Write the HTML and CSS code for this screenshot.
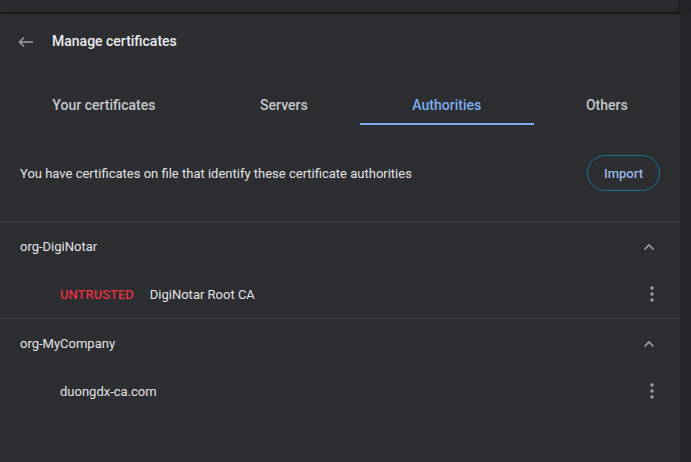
FILE: index.html
```html
<!DOCTYPE html>
<html>
<head>
<meta charset="utf-8">
<link rel="stylesheet" href="styles.css">
</head>
<body>
<div class="topbar"></div>
<div class="page">
  <main class="card">
    <header class="header">
      <svg class="back" width="16" height="12" viewBox="0 0 16 12"><path d="M15 6H1.5M6 1.5L1.5 6 6 10.5" fill="none" stroke="#9aa0a6" stroke-width="1.5"/></svg>
      <h1 class="title">Manage certificates</h1>
    </header>
    <nav class="tabs">
      <div class="tab">Your certificates</div>
      <div class="tab">Servers</div>
      <div class="tab active">Authorities</div>
      <div class="tab">Others</div>
    </nav>
    <section class="intro">
      <p class="intro-text">You have certificates on file that identify these certificate authorities</p>
      <button class="import">Import</button>
    </section>
    <section class="group">
      <div class="group-head">
        <span>org-DigiNotar</span>
        <svg class="chev" width="12" height="8" viewBox="0 0 12 8"><path d="M1.5 6.5L6 2l4.5 4.5" fill="none" stroke="#9aa0a6" stroke-width="1.6"/></svg>
      </div>
      <div class="item">
        <span class="untrusted">UNTRUSTED</span>
        <span class="name">DigiNotar Root CA</span>
        <svg class="kebab" width="4" height="16" viewBox="0 0 4 16"><circle cx="2" cy="2" r="1.7" fill="#9aa0a6"/><circle cx="2" cy="8" r="1.7" fill="#9aa0a6"/><circle cx="2" cy="14" r="1.7" fill="#9aa0a6"/></svg>
      </div>
    </section>
    <section class="group last">
      <div class="group-head">
        <span>org-MyCompany</span>
        <svg class="chev" width="12" height="8" viewBox="0 0 12 8"><path d="M1.5 6.5L6 2l4.5 4.5" fill="none" stroke="#9aa0a6" stroke-width="1.6"/></svg>
      </div>
      <div class="item">
        <span class="name">duongdx-ca.com</span>
        <svg class="kebab" width="4" height="16" viewBox="0 0 4 16"><circle cx="2" cy="2" r="1.7" fill="#9aa0a6"/><circle cx="2" cy="8" r="1.7" fill="#9aa0a6"/><circle cx="2" cy="14" r="1.7" fill="#9aa0a6"/></svg>
      </div>
    </section>
  </main>
  <div class="side"></div>
</div>
</body>
</html>
```
FILE: styles.css
```css
* { box-sizing: border-box; }
html, body { margin: 0; height: 100%; }
body {
  background: #222326;
  font-family: Roboto, "Noto Sans", sans-serif;
  color: #e8eaed;
  overflow: hidden;
}
.topbar {
  height: 12px;
  width: 678px;
  background: #2a2b2e;
  border-bottom-right-radius: 6px;
}
.page {
  display: flex;
  height: 450px;
  margin-top: 2px;
}
.card {
  width: 680px;
  flex: none;
  background: #2d2e32;
  box-shadow: 0 -1px 2px rgba(0,0,0,0.5);
}
.side {
  flex: 1;
  background: #242528;
}
.header {
  height: 54px;
  display: flex;
  align-items: center;
  padding-left: 18px;
}
.back { margin-right: 18px; margin-top: 1px; }
.title {
  margin: 0;
  font-size: 14px;
  font-weight: 500;
  color: #e8eaed;
}
.tabs {
  display: flex;
  margin-top: 10px;
}
.tab {
  flex: 1 1 auto;
  text-align: center;
  font-size: 14px;
  font-weight: 500;
  line-height: 17px;
  padding: 19px 0 9px;
  border-bottom: 2px solid transparent;
  color: #c4c7cc;
}
.tab.active {
  color: #7eabef;
  border-bottom-color: #7eabef;
}
.intro {
  height: 97px;
  display: flex;
  align-items: center;
  justify-content: space-between;
  padding: 0 20px;
  border-bottom: 1px solid #3e3f43;
}
.intro-text {
  margin: 0;
  font-size: 13px;
  color: #e3e3e3;
}
.import {
  width: 73px;
  height: 36px;
  border-radius: 18px;
  border: 1.5px solid #17729a;
  background: transparent;
  color: #9ab8e2;
  font-family: Roboto, sans-serif;
  font-size: 13px;
  font-weight: 500;
  padding: 0;
}
.group { border-bottom: 1px solid #3e3f43; }
.group.last { border-bottom: none; }
.group-head {
  height: 48px;
  display: flex;
  align-items: center;
  justify-content: space-between;
  padding: 1px 25px 0 20px;
  font-size: 13px;
  color: #e3e3e3;
}
.item {
  height: 48px;
  display: flex;
  align-items: center;
  padding: 0 26px 0 60px;
  font-size: 13px;
  color: #e3e3e3;
}
.untrusted {
  color: #e0323f;
  font-weight: 500;
  margin-right: 16px;
}
.name { flex: 1; }
```
